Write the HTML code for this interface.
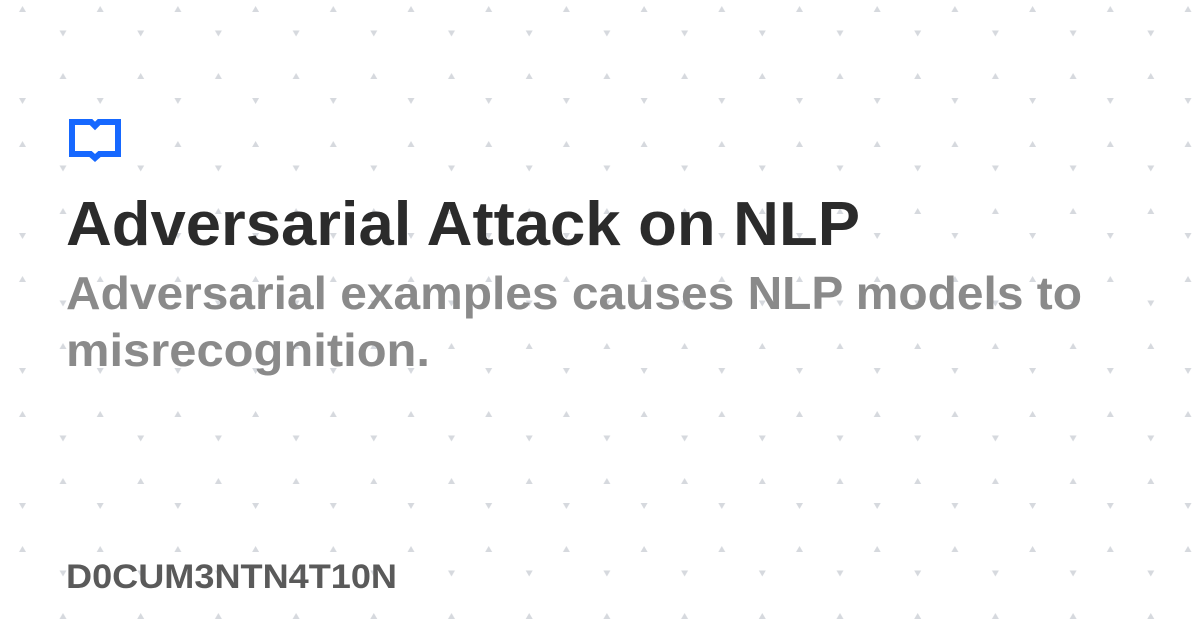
<!DOCTYPE html>
<html><head><meta charset="utf-8"><style>
html,body{margin:0;padding:0;}
body{width:1200px;height:630px;position:relative;overflow:hidden;background:#fff;font-family:"Liberation Sans",sans-serif;font-weight:bold;}
svg.bg{position:absolute;left:0;top:0;}
.t{position:absolute;left:66px;line-height:1;white-space:nowrap;display:inline-block;transform-origin:0 0;}
#t1{font-size:62px;top:194px;color:#2b2b2b;}
#t2{font-size:46px;top:270px;color:#8a8a8a;}
#t3{font-size:46px;top:327px;color:#8a8a8a;}
#t4{font-size:34px;top:560px;color:#5a5a5a;}
</style></head><body>
<svg class="bg" width="1200" height="630">
<defs>
<pattern id="p" x="0" y="0" width="77.7" height="135" patternUnits="userSpaceOnUse">
<path d="M22.5 6 L26 12 L19 12Z" fill="#d6d9de"/>
<path d="M59.5 30.5 L66.5 30.5 L63 36.5Z" fill="#d6d9de"/>
<path d="M63 73 L66.5 79 L59.5 79Z" fill="#d6d9de"/>
<path d="M19 98 L26 98 L22.5 104Z" fill="#d6d9de"/>
</pattern>
</defs>
<rect width="1200" height="630" fill="url(#p)"/>
<path d="M72 122 H91 L95 126 L99 122 H118 V154 H99.5 L95 158 L90.5 154 H72 Z" fill="#fff" stroke="#1668ff" stroke-width="6" stroke-linejoin="miter"/>
</svg>
<div class="t" id="t1">Adversarial Attack on NLP</div>
<div class="t" id="t2">Adversarial examples causes NLP models to</div>
<div class="t" id="t3">misrecognition.</div>
<div class="t" id="t4">D0CUM3NTN4T10N</div>
<script>
[["t1",794],["t2",1016],["t3",364],["t4",331]].forEach(function(a){var e=document.getElementById(a[0]);var w=e.getBoundingClientRect().width;e.style.transform="scaleX("+(a[1]/w)+")";});
</script>
</body></html>
